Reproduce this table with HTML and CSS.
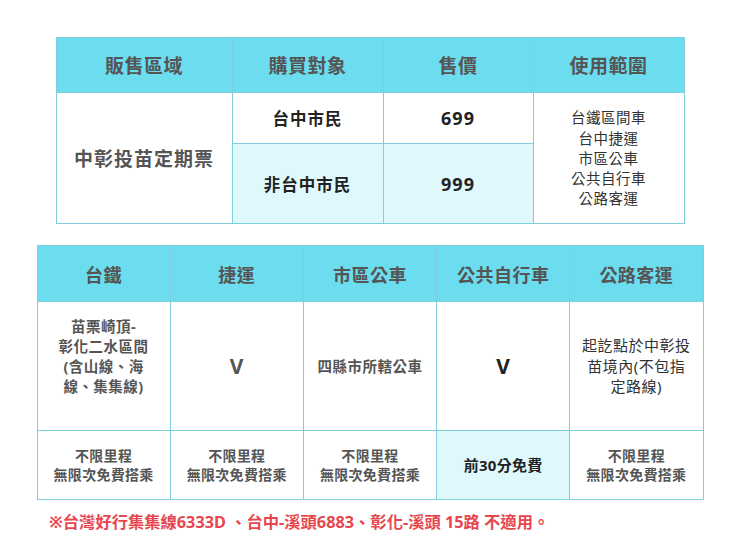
FILE: index.html
```html
<!DOCTYPE html>
<html lang="zh-Hant">
<head>
<meta charset="utf-8">
<link rel="stylesheet" href="styles.css">
</head>
<body>
<main class="page">
  <table class="grid t1">
    <colgroup><col class="c1"><col class="c2"><col class="c3"><col class="c4"></colgroup>
    <thead>
      <tr><th>販售區域</th><th>購買對象</th><th>售價</th><th>使用範圍</th></tr>
    </thead>
    <tbody>
      <tr class="r1">
        <td rowspan="2" class="region">中彰投苗定期票</td>
        <td class="strong">台中市民</td>
        <td class="strong num">699</td>
        <td rowspan="2" class="range">台鐵區間車<br>台中捷運<br>市區公車<br>公共自行車<br>公路客運</td>
      </tr>
      <tr class="r2">
        <td class="strong tint">非台中市民</td>
        <td class="strong num tint">999</td>
      </tr>
    </tbody>
  </table>

  <table class="grid t2">
    <colgroup><col><col><col><col><col></colgroup>
    <thead>
      <tr><th>台鐵</th><th>捷運</th><th>市區公車</th><th>公共自行車</th><th>公路客運</th></tr>
    </thead>
    <tbody>
      <tr class="r3">
        <td class="gray rail">苗栗崎頂-<br>彰化二水區間<br>(含山線、海<br>線、集集線)</td>
        <td class="v gray">V</td>
        <td class="gray">四縣市所轄公車</td>
        <td class="v dark">V</td>
        <td class="plain">起訖點於中彰投<br>苗境內(不包指<br>定路線)</td>
      </tr>
      <tr class="r4">
        <td class="gray sm">不限里程<br>無限次免費搭乘</td>
        <td class="gray sm">不限里程<br>無限次免費搭乘</td>
        <td class="gray sm">不限里程<br>無限次免費搭乘</td>
        <td class="dark sm free tint">前30分免費</td>
        <td class="gray sm">不限里程<br>無限次免費搭乘</td>
      </tr>
    </tbody>
  </table>

  <p class="note">※台灣好行集集線6333D 、台中-溪頭6883、彰化-溪頭 15路 不適用。</p>
</main>
</body>
</html>
```

FILE: styles.css
```css
html, body {
  margin: 0;
  padding: 0;
  background: #ffffff;
}
body {
  font-family: "Noto Sans", "Noto Sans CJK TC", sans-serif;
  color: #333;
}
.page {
  width: 740px;
  padding-top: 37px;
  display: flex;
  flex-direction: column;
  align-items: center;
}
.grid {
  border-collapse: collapse;
  table-layout: fixed;
}
.grid th, .grid td {
  border: 1px solid #7fcfdc;
  text-align: center;
  vertical-align: middle;
  padding: 0;
}
.grid th {
  background: #6cdcef;
  color: #555;
  font-weight: 700;
  font-size: 19px;
  letter-spacing: 0.5px;
}
.tint { background: #dff8fc; }

.t1 { width: 629px; }
.t1 .c1 { width: 176px; }
.t1 .c2 { width: 151px; }
.t1 .c3 { width: 150px; }
.t1 .c4 { width: 151px; }
.t1 thead tr { height: 55px; }
.t1 .r1 { height: 51px; }
.t1 .r2 { height: 80px; }
.region {
  font-size: 19px;
  font-weight: 700;
  color: #555;
  letter-spacing: 1px;
}
.strong {
  font-size: 16.5px;
  font-weight: 700;
  color: #222;
  letter-spacing: 1px;
}
.num { font-size: 18px; letter-spacing: 1px; }
.range {
  font-size: 14.5px;
  line-height: 20.3px;
  color: #333;
  letter-spacing: 0.5px;
}

.t2 { width: 667px; margin-top: 21px; }
.t2 col { width: 133px; }
.t2 thead tr { height: 56px; }
.t2 th { font-size: 18px; }
.t2 .r3 { height: 129px; }
.t2 .r4 { height: 69px; }
.gray {
  color: #555;
  font-weight: 700;
  font-size: 14.5px;
  line-height: 20px;
  letter-spacing: 0.5px;
}
.grid td.rail { padding-bottom: 20px; }
.dark {
  color: #222;
  font-weight: 700;
  font-size: 14.5px;
  line-height: 20px;
}
.plain {
  color: #333;
  font-size: 15px;
  line-height: 20.5px;
  letter-spacing: 0.5px;
}
.v { font-size: 21px; }
.sm { font-size: 14px; line-height: 19px; letter-spacing: 0.3px; }
.free { font-size: 15px; }

.note {
  margin: 12px 0 0 0;
  align-self: flex-start;
  padding-left: 49px;
  color: #e8464f;
  font-weight: 700;
  font-size: 16.3px;
  line-height: 20px;
}
```
